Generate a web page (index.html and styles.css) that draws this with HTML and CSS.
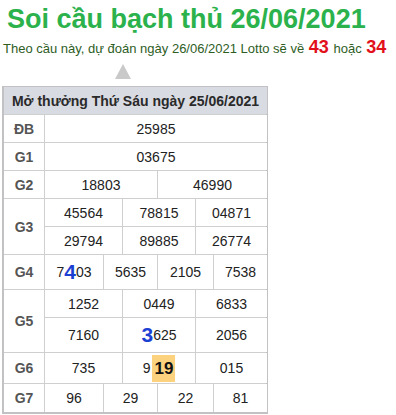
FILE: index.html
```html
<!DOCTYPE html>
<html lang="vi">
<head>
<meta charset="utf-8">
<title>Soi cầu bạch thủ 26/06/2021</title>
<link rel="stylesheet" href="styles.css">
</head>
<body>
<div class="page">
  <h1 class="title">Soi cầu bạch thủ 26/06/2021</h1>
  <p class="lead">Theo cầu này, dự đoán ngày 26/06/2021 Lotto sẽ về <b class="hot">43</b> hoặc <b class="hot">34</b></p>
  <div class="pointer"></div>
  <div class="results">
    <div class="head">Mở thưởng Thứ Sáu ngày 25/06/2021</div>

    <div class="lbl">ĐB</div>
    <div class="c s6">25985</div>

    <div class="lbl">G1</div>
    <div class="c s6">03675</div>

    <div class="lbl">G2</div>
    <div class="c s3">18803</div>
    <div class="c s3">46990</div>

    <div class="lbl r2">G3</div>
    <div class="c s2">45564</div>
    <div class="c s2">78815</div>
    <div class="c s2">04871</div>
    <div class="c s2">29794</div>
    <div class="c s2">89885</div>
    <div class="c s2">26774</div>

    <div class="lbl">G4</div>
    <div class="c s1">7<b class="pos">4</b>03</div>
    <div class="c s2">5635</div>
    <div class="c s2">2105</div>
    <div class="c s1">7538</div>

    <div class="lbl r2">G5</div>
    <div class="c s2">1252</div>
    <div class="c s2">0449</div>
    <div class="c s2">6833</div>
    <div class="c s2">7160</div>
    <div class="c s2"><b class="pos">3</b>625</div>
    <div class="c s2">2056</div>

    <div class="lbl">G6</div>
    <div class="c s2">735</div>
    <div class="c s2">9<b class="hit">19</b></div>
    <div class="c s2">015</div>

    <div class="lbl">G7</div>
    <div class="c s1">96</div>
    <div class="c s2">29</div>
    <div class="c s2">22</div>
    <div class="c s1">81</div>
  </div>
</div>
</body>
</html>
```

FILE: styles.css
```css
html, body {
  margin: 0;
  padding: 0;
  background: #ffffff;
}

body {
  font-family: "Liberation Sans", Arial, sans-serif;
  color: #222;
}

.page {
  padding: 0 0 0 2px;
}

.title {
  margin: 3px 0 0 5px;
  font-size: 27px;
  line-height: 32px;
  font-weight: bold;
  color: #2bb24c;
}

.lead {
  margin: 2px 0 0 1px;
  font-size: 13px;
  line-height: 20px;
  color: #2e5d1f;
}

.hot {
  color: #e2101a;
  font-size: 18px;
  margin: 0 1px;
}

.pointer {
  width: 0;
  height: 0;
  margin: 5px 0 7px 113px;
  border-left: 8px solid transparent;
  border-right: 8px solid transparent;
  border-bottom: 15px solid #c9c9c9;
}

.results {
  display: grid;
  width: 262px;
  grid-template-columns: 40px 58px 18px 34px 37px 17px 53px;
  grid-template-rows: 27px 27px 27px 27px 27px 27px 34px 27px 34px 30px 28px;
  gap: 1px;
  background: #cfcfcf;
  border: solid #c2c2c4;
  border-width: 1px 2px 2px 2px;
  font-size: 14px;
}

.results > div {
  background: #fff;
  display: flex;
  align-items: center;
  justify-content: center;
}

.results > .head {
  grid-column: 1 / -1;
  background: #d9dbe2;
  font-weight: bold;
  font-size: 14px;
  color: #2a2a2a;
}

.results > .lbl {
  font-weight: bold;
  color: #555;
  font-size: 14px;
}

.r2 { grid-row: span 2; }
.s1 { grid-column: span 1; }
.s2 { grid-column: span 2; }
.s3 { grid-column: span 3; }
.s6 { grid-column: span 6; }

.c {
  color: #222;
}

.pos {
  color: #1c3fd3;
  font-size: 21px;
}

.hit {
  background: #fdd27e;
  color: #111;
  font-size: 17px;
  padding: 4px 2px 3px;
  margin-left: 2px;
}
```
